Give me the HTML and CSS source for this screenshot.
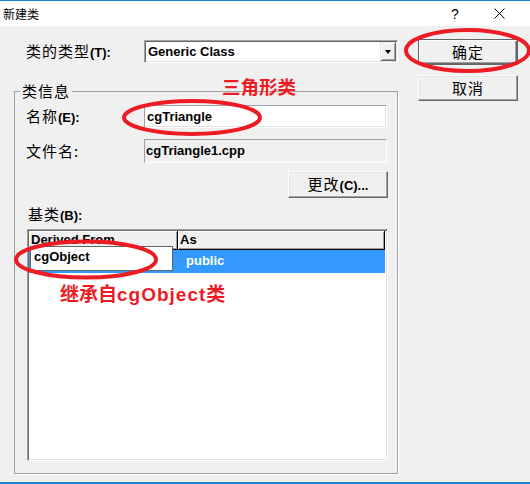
FILE: index.html
```html
<!DOCTYPE html>
<html lang="zh-CN">
<head>
<meta charset="utf-8">
<title>新建类</title>
<link rel="stylesheet" href="styles.css">
</head>
<body>
<div class="window">
  <div class="topline"></div>
  <div class="titlebar">
    <span class="title">新建类</span>
    <span class="help">?</span>
    <svg class="close" width="11" height="11" viewBox="0 0 11 11"><path d="M0.5 0.5 L10.5 10.5 M10.5 0.5 L0.5 10.5" stroke="#000" stroke-width="1" fill="none"/></svg>
  </div>
  <div class="client">
    <div class="left">
      <div class="type-row">
        <span class="lbl type-lbl">类的类型<b>(T):</b></span>
        <div class="combo">
          <span class="combo-text">Generic Class</span>
          <span class="drop"><span class="tri"></span></span>
        </div>
      </div>
      <fieldset class="group">
        <legend class="legend">类信息</legend>
        <div class="group-body">
          <div class="field-row name-row">
            <span class="lbl field-lbl">名称<b>(E):</b></span>
            <div class="input">cgTriangle</div>
          </div>
          <div class="field-row file-row">
            <span class="lbl field-lbl">文件名:</span>
            <div class="input readonly">cgTriangle1.cpp</div>
          </div>
          <div class="change-row">
            <button class="btn change">更改<b>(C)...</b></button>
          </div>
          <div class="lbl base-lbl">基类<b>(B):</b></div>
          <div class="list">
            <div class="lhead">
              <div class="hcell c1">Derived From</div>
              <div class="hcell c2">As</div>
            </div>
            <div class="lrow">
              <div class="rcell c1"></div>
              <div class="rcell c2">public</div>
            </div>
            <div class="editor">cgObject</div>
          </div>
        </div>
      </fieldset>
    </div>
    <div class="right">
      <button class="btn default">确定</button>
      <button class="btn">取消</button>
    </div>
  </div>
  <div class="bottomline"></div>

  <svg class="marks" width="530" height="484" viewBox="0 0 530 484">
    <ellipse cx="467.5" cy="50.5" rx="61.5" ry="20.5" fill="none" stroke="#ed1c24" stroke-width="4"/>
    <ellipse cx="192" cy="117.5" rx="68" ry="16.5" fill="none" stroke="#ed1c24" stroke-width="4"/>
    <ellipse cx="86" cy="259.5" rx="70" ry="18" fill="none" stroke="#ed1c24" stroke-width="4"/>
  </svg>
  <div class="note note-tri">三角形类</div>
  <div class="note note-obj">继承自<span class="latin">cgObject</span>类</div>
</div>
</body>
</html>
```
FILE: styles.css
```css
* { box-sizing: border-box; }

body {
  margin: 0;
  width: 530px;
  height: 484px;
  overflow: hidden;
  background: #f0f0f0;
  font-family: "Liberation Sans", "Noto Sans CJK SC", sans-serif;
  color: #000;
}

.window {
  position: relative;
  width: 530px;
  height: 484px;
  display: flex;
  flex-direction: column;
  background: #f0f0f0;
}

.topline { height: 1px; background: #1883d7; flex: none; }
.bottomline { height: 2px; background: #1883d7; flex: none; }

.titlebar {
  height: 25px;
  flex: none;
  background: #fff;
  display: flex;
  align-items: center;
  padding-left: 3px;
}
.title {
  flex: 1;
  font-family: "Noto Sans CJK SC", sans-serif;
  font-size: 12px;
  line-height: 14px;
}
.help {
  width: 14px;
  text-align: center;
  font-family: "Liberation Sans", sans-serif;
  font-size: 14px;
  line-height: 14px;
  margin-right: 32px;
}
.close {
  display: block;
  margin-right: 25px;
}

.client {
  flex: 1;
  display: flex;
  padding: 13px 0 0 14px;
}

.left { width: 384px; flex: none; }
.right {
  width: 100px;
  margin-left: 20px;
  display: flex;
  flex-direction: column;
  gap: 10px;
}

.lbl {
  font-family: "Noto Sans CJK SC", sans-serif;
  font-size: 15px;
  letter-spacing: 1px;
  line-height: 16px;
}
.lbl b {
  font-family: "Liberation Sans", sans-serif;
  font-size: 13px;
  letter-spacing: 0;
}

.type-row {
  height: 25px;
  display: flex;
  align-items: center;
}
.type-lbl {
  width: 130px;
  padding-left: 12px;
}

.sunken {
  border: 1px solid;
}

.combo {
  width: 254px;
  height: 23px;
  background: #fff;
  border: 1px solid;
  border-color: #a0a0a0 #fff #fff #a0a0a0;
  box-shadow: inset 1px 1px 0 #696969, inset -1px -1px 0 #e3e3e3;
  display: flex;
  align-items: center;
  padding: 0 1px 0 3px;
}
.combo-text {
  flex: 1;
  font-weight: bold;
  font-size: 13px;
}
.drop {
  width: 16px;
  height: 19px;
  background: #f0f0f0;
  border: 1px solid;
  border-color: #e3e3e3 #696969 #696969 #e3e3e3;
  box-shadow: inset 1px 1px 0 #fff, inset -1px -1px 0 #a0a0a0;
  display: flex;
  align-items: center;
  justify-content: center;
}
.tri {
  width: 0;
  height: 0;
  border-left: 3.5px solid transparent;
  border-right: 3.5px solid transparent;
  border-top: 4px solid #000;
  margin-top: 1px;
}

.group {
  margin: 19px 0 0 0;
  padding: 0;
  min-width: 0;
  width: 384px;
  border: 1px solid #a0a0a0;
  box-shadow: 1px 1px 0 #fff;
}
.legend {
  margin-left: 5px;
  padding: 0 2px;
  font-family: "Noto Sans CJK SC", sans-serif;
  font-size: 15px;
  letter-spacing: 1px;
  line-height: 16px;
}

.group-body {
  padding: 6px 0 12px 11px;
}

.field-row {
  display: flex;
  align-items: center;
}
.field-lbl { width: 118px; }
.file-row { margin-top: 11px; }

.input {
  width: 243px;
  height: 23px;
  background: #fff;
  border: 1px solid;
  border-color: #a0a0a0 #fff #fff #a0a0a0;
  box-shadow: inset -1px -1px 0 #e3e3e3;
  font-weight: bold;
  font-size: 13px;
  line-height: 21px;
  padding-left: 2px;
}
.input.readonly {
  height: 24px;
  line-height: 22px;
  background: #f0f0f0;
  box-shadow: none;
  padding-left: 1px;
}

.btn {
  display: block;
  width: 100px;
  height: 26px;
  padding: 0;
  margin: 0;
  background: #f0f0f0;
  border: 1px solid;
  border-color: #fff #696969 #696969 #fff;
  box-shadow: inset -1px -1px 0 #a0a0a0, inset 1px 1px 0 #e3e3e3;
  font-family: "Noto Sans CJK SC", sans-serif;
  font-size: 15px;
  letter-spacing: 1px;
  line-height: 16px;
  color: #000;
}
.btn b {
  font-family: "Liberation Sans", sans-serif;
  font-size: 13px;
  letter-spacing: 0;
}
.btn.default {
  border: 1px solid #646464;
  box-shadow: inset 1px 1px 0 #fff, inset -1px -1px 0 #696969, inset -2px -2px 0 #a0a0a0;
}

.change-row {
  margin-top: 8px;
  display: flex;
}
.change {
  margin-left: 262px;
  height: 27px;
}

.base-lbl {
  margin-top: 8px;
  padding-left: 2px;
}

.list {
  position: relative;
  margin-top: 5px;
  margin-left: 1px;
  width: 361px;
  height: 232px;
  background: #fff;
  border: 1px solid;
  border-color: #a0a0a0 #fff #fff #a0a0a0;
  box-shadow: inset 1px 1px 0 #696969, inset -1px -1px 0 #e3e3e3;
  padding: 1px 2px 2px 1px;
}

.lhead {
  display: flex;
  height: 19px;
}
.hcell {
  background: #f0f0f0;
  border-right: 1px solid #000;
  border-bottom: 1px solid #000;
  box-shadow: inset 1px 1px 0 #fff, inset -1px -1px 0 #a0a0a0;
  font-weight: bold;
  font-size: 13px;
  line-height: 18px;
  padding-left: 2px;
}
.c1 { width: 149px; flex: none; }
.c2 { flex: 1; }

.lrow {
  display: flex;
  height: 23px;
  background: #3399ff;
}
.rcell {
  color: #fff;
  font-weight: bold;
  font-size: 13px;
  line-height: 22px;
}
.rcell.c2 { padding-left: 8px; }

.editor {
  position: absolute;
  left: 2px;
  top: 16px;
  width: 143px;
  height: 25px;
  background: #fff;
  border: 1px solid #646464;
  font-weight: bold;
  font-size: 13px;
  line-height: 20px;
  padding-left: 3px;
}

.marks {
  position: absolute;
  left: 0;
  top: 0;
  pointer-events: none;
}

.note {
  position: absolute;
  color: #ed1c24;
  font-family: "Liberation Sans", "Noto Sans CJK SC", sans-serif;
  font-weight: bold;
  line-height: 20px;
  white-space: nowrap;
}
.note-tri {
  left: 222px;
  top: 78px;
  font-size: 18.5px;
}
.note-obj {
  left: 60px;
  top: 285px;
  font-size: 19px;
}
.note .latin {
  letter-spacing: 1px;
}
```
